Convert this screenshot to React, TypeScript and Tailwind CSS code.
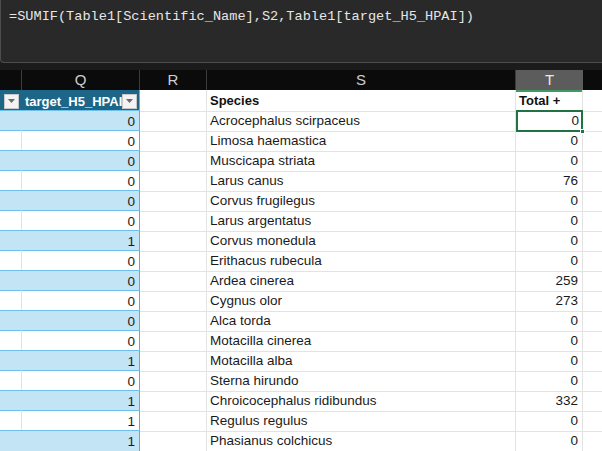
import React from "react";

const rows: [number, string, number][] = [
  [0, "Acrocephalus scirpaceus", 0],
  [0, "Limosa haemastica", 0],
  [0, "Muscicapa striata", 0],
  [0, "Larus canus", 76],
  [0, "Corvus frugilegus", 0],
  [0, "Larus argentatus", 0],
  [1, "Corvus monedula", 0],
  [0, "Erithacus rubecula", 0],
  [0, "Ardea cinerea", 259],
  [0, "Cygnus olor", 273],
  [0, "Alca torda", 0],
  [0, "Motacilla cinerea", 0],
  [1, "Motacilla alba", 0],
  [0, "Sterna hirundo", 0],
  [1, "Chroicocephalus ridibundus", 332],
  [1, "Regulus regulus", 0],
  [1, "Phasianus colchicus", 0],
];

function FilterBtn() {
  return (
    <div className="w-[15px] h-[15px] bg-[#f3f3f3] border border-[#c8c8c8] flex items-center justify-center shrink-0">
      <svg width="7" height="4" viewBox="0 0 7 4">
        <path d="M0 0 L7 0 L3.5 4 Z" fill="#6b6b6b" />
      </svg>
    </div>
  );
}

export default function App() {
  const font = { fontFamily: '"Liberation Sans", Arial, sans-serif' };
  return (
    <div className="w-[602px] h-[451px] overflow-hidden bg-white" style={font}>
      {/* formula bar */}
      <div className="h-[70px] bg-[#1b1b1b] flex flex-col">
        <div className="h-[63px] bg-[#292929] border-b border-l border-[#4d4d4d] rounded-bl-[4px] pl-[8px] pt-[3px]">
          <span
            className="text-[13.6px] text-[#e6e6e6] leading-[20px]"
            style={{ fontFamily: '"Liberation Mono", "DejaVu Sans Mono", monospace' }}
          >
            =SUMIF(Table1[Scientific_Name],S2,Table1[target_H5_HPAI])
          </span>
        </div>
      </div>
      {/* column headers */}
      <div className="grid grid-cols-[22px_118px_67px_309px_67px_1fr] h-[20px] bg-[#0b0b0b] text-[#cfcfcf] text-[15px] leading-[20px]">
        <div className="border-r border-[#3c3c3c]" />
        <div className="border-r border-[#3c3c3c] text-center">Q</div>
        <div className="border-r border-[#3c3c3c] text-center">R</div>
        <div className="border-r border-[#3c3c3c] text-center">S</div>
        <div className="bg-[#5c5c5c] border-b-2 border-[#3f9b5f] text-center text-[#e8e8e8]">T</div>
        <div />
      </div>
      {/* table header row */}
      <div className="grid grid-cols-[22px_118px_67px_309px_67px_1fr] h-[20px] text-[13px] leading-[21px] font-bold">
        <div className="bg-[#1d6688] flex items-center pl-[4px]">
          <FilterBtn />
        </div>
        <div className="bg-[#1d6688] border-r border-[#55b4e4] flex items-center justify-between pl-[3px] pr-[2px] text-white">
          <span>target_H5_HPAI</span>
          <FilterBtn />
        </div>
        <div className="border-r border-b border-[#e3e3e3]" />
        <div className="border-r border-b border-[#e3e3e3] pl-[3px] text-[#111]">Species</div>
        <div className="border-r border-b border-[#e3e3e3] pl-[3px] text-[#111]">Total +</div>
        <div className="border-b border-[#e3e3e3]" />
      </div>
      {rows.map(([q, name, t], i) => {
        const blue = i % 2 === 0;
        return (
          <div
            key={i}
            className="grid grid-cols-[22px_118px_67px_309px_67px_1fr] h-[20px] text-[13.5px] leading-[21px] text-[#1a1a1a]"
          >
            <div
              className={
                blue
                  ? "bg-[#c2e4f5] border-t border-[#6cc0ea]"
                  : "bg-white border-t border-r border-[#6cc0ea] border-r-[#e3e3e3]"
              }
            />
            <div
              className={
                (blue ? "bg-[#c2e4f5] " : "bg-white ") +
                "border-t border-r border-[#6cc0ea] border-r-[#4fb1e3] text-right pr-[4px]"
              }
            >
              {q}
            </div>
            <div className="border-r border-b border-[#e3e3e3]" />
            <div className="border-r border-b border-[#e3e3e3] pl-[3px]">{name}</div>
            {i === 0 ? (
              <div className="relative border-2 border-[#217346] text-right pr-[2px] leading-[18px]">
                {t}
                <div className="absolute right-[-4px] bottom-[-4px] w-[5px] h-[5px] bg-[#217346] border border-white" />
              </div>
            ) : (
              <div className="border-r border-b border-[#e3e3e3] text-right pr-[4px]">{t}</div>
            )}
            <div className="border-b border-[#e3e3e3]" />
          </div>
        );
      })}
    </div>
  );
}
